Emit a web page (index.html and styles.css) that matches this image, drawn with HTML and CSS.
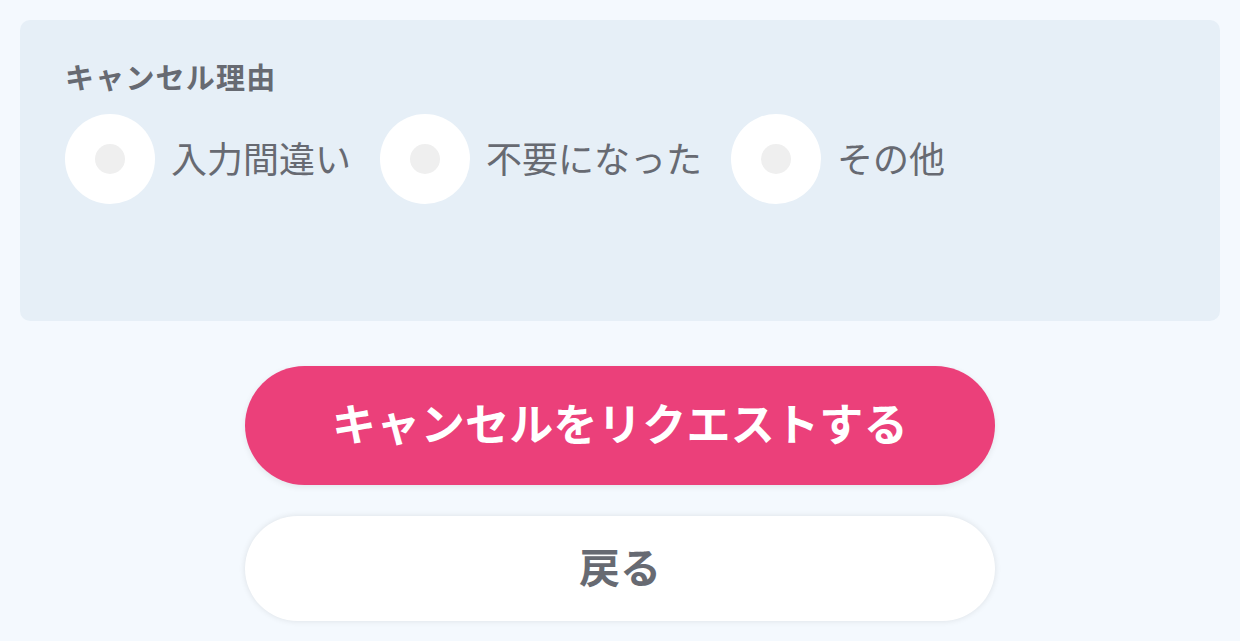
FILE: index.html
```html
<!DOCTYPE html>
<html lang="ja">
<head>
    <meta charset="UTF-8">
    <title>キャンセル</title>
    <link rel="stylesheet" href="styles.css">
</head>
<body>

    <div class="reason-panel">
        <div class="reason-title">キャンセル理由</div>

        <div class="reason-options">
            <label class="reason-option">
                <span class="radio-circle"><span class="radio-dot"></span></span>
                <span class="radio-label">入力間違い</span>
            </label>
            <label class="reason-option">
                <span class="radio-circle"><span class="radio-dot"></span></span>
                <span class="radio-label">不要になった</span>
            </label>
            <label class="reason-option">
                <span class="radio-circle"><span class="radio-dot"></span></span>
                <span class="radio-label">その他</span>
            </label>
        </div>
    </div>

    <div class="actions">
        <button class="btn btn-request">キャンセルをリクエストする</button>
        <button class="btn btn-back">戻る</button>
    </div>

</body>
</html>
```

FILE: styles.css
```css
body {
    margin: 0;
    padding: 20px;
    background-color: #f4f9fe;
    font-family: 'Noto Sans CJK JP', 'Noto Sans', sans-serif;
    color: #676a72;
}

.reason-panel {
    box-sizing: border-box;
    height: 301px;
    padding: 39px 45px 0;
    background-color: #e6eff7;
    border-radius: 10px;
}

.reason-title {
    font-size: 29px;
    font-weight: bold;
    line-height: 34px;
    letter-spacing: 1.2px;
}

.reason-options {
    display: flex;
    margin-top: 21px;
}

.reason-option {
    display: flex;
    align-items: center;
    margin-right: 29px;
    cursor: pointer;
}

.radio-circle {
    width: 90px;
    height: 90px;
    border-radius: 50%;
    background-color: #fff;
    display: flex;
    align-items: center;
    justify-content: center;
}

.radio-dot {
    width: 30px;
    height: 30px;
    border-radius: 50%;
    background-color: #efefef;
}

.radio-label {
    margin-left: 16px;
    padding-bottom: 4px;
    font-size: 36px;
    color: #676a72;
}

.actions {
    display: flex;
    flex-direction: column;
    align-items: center;
    margin-top: 45px;
}

.btn {
    width: 750px;
    border: none;
    border-radius: 60px;
    font-family: inherit;
    font-weight: bold;
    cursor: pointer;
}

.btn-request {
    height: 119px;
    padding-bottom: 8px;
    background-color: #eb407a;
    color: #fff;
    font-size: 44px;
    letter-spacing: 0.3px;
    box-shadow: 0 2px 6px rgba(0, 0, 0, 0.08);
}

.btn-back {
    height: 105px;
    margin-top: 31px;
    padding-bottom: 8px;
    background-color: #fff;
    color: #676a72;
    font-size: 41px;
    box-shadow: 0 0 6px rgba(0, 0, 0, 0.1);
}
```
